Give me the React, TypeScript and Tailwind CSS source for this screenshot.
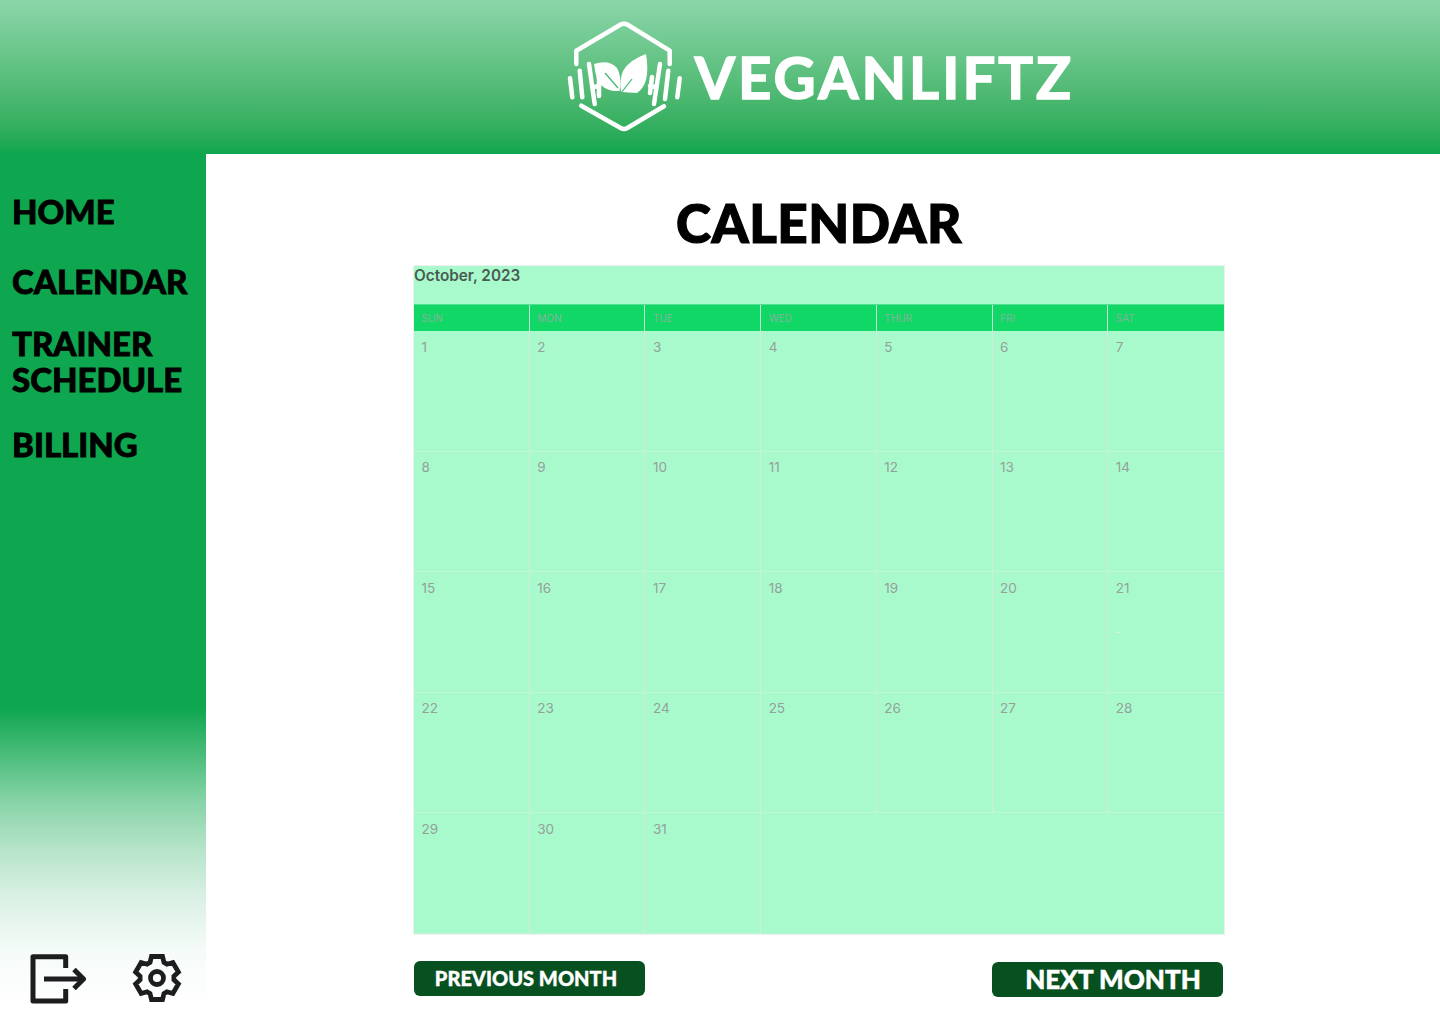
const DAYS = ["SUN", "MON", "TUE", "WED", "THUR", "FRI", "SAT"];
const DATES = Array.from({ length: 31 }, (_, i) => i + 1);
const NAV = ["HOME", "CALENDAR", "TRAINER SCHEDULE", "BILLING"];

const display = "font-['Lato','Liberation_Sans',sans-serif]";

function Logo() {
  return (
    <svg width="116" height="112" viewBox="0 0 116 112" fill="none" className="shrink-0">
      <g stroke="#fff" strokeWidth="4.500" strokeLinecap="round" strokeLinejoin="round">
        <path d="M9.300 43 V29.700 L53.700 3.500 Q57 1.800 60.300 3.500 L102.700 29.700 V43" />
        <path d="M14.300 84.700 L53.700 107 Q57 108.800 60.300 107 L97 85.300" />
        <path d="M3 57.300 L5.300 76.300" />
        <path d="M12.700 49.700 L15.300 76.300" />
        <path d="M22 43 L27.700 83" />
        <path d="M32 56 V75" />
        <path d="M27 66 L32 65" />
        <path d="M112.700 57.300 L110.300 76.300" />
        <path d="M101.300 49.700 L98 78" />
        <path d="M93 43 L87 83" />
        <path d="M85 56 L83 72" />
        <path d="M88 66 L83 65" />
      </g>
      <path d="M27 43 Q42 38 50 47 Q55 55 52.500 70 Q36 71 30 58 Q28 51 27 43 Z" fill="#fff" />
      <path d="M38 52 L51 67" stroke="#3fb573" strokeWidth="1.200" />
      <path d="M79 33 Q62 39 56 50 Q52 60 54 71 L70 72 Q84 63 79 33 Z" fill="#fff" />
      <path d="M54 72 L65 58" stroke="#3fb573" strokeWidth="1.200" />
    </svg>
  );
}

function LogoutIcon() {
  return (
    <svg width="56" height="50" viewBox="0 0 56 50" fill="none" stroke="#1d1d1f" strokeWidth="5">
      <path d="M35.700 14 V2.700 H3 V47 H35.700 V35" strokeLinejoin="round" />
      <path d="M14 25 H52" />
      <path d="M44 15.500 L53.500 25 L44 34.500" />
    </svg>
  );
}

// six square teeth round a ring
const GEAR_POINTS = [0, 1, 2, 3, 4, 5]
  .flatMap((n) => {
    const a = (n * Math.PI) / 3;
    const pt = (x: number, y: number) =>
      `${(25 + x * Math.cos(a) - y * Math.sin(a)).toFixed(2)},${(24 + x * Math.sin(a) + y * Math.cos(a)).toFixed(2)}`;
    return [pt(-7, -15.500), pt(-5.500, -21.500), pt(5.500, -21.500), pt(7, -15.500)];
  })
  .join(" ");

function GearIcon() {
  return (
    <svg width="50" height="50" viewBox="0 0 50 50" fill="none" stroke="#1d1d1f" strokeWidth="4.800">
      <polygon points={GEAR_POINTS} strokeLinejoin="miter" />
      <circle cx="25" cy="24" r="6.500" />
    </svg>
  );
}

function DayCell({ date }: { date: number }) {
  return (
    <div className="h-[120.500px] border-r border-b border-r-[#d3eadc] border-b-[#c2f5d8] px-[7.500px] pt-[6.500px] text-[13.500px] leading-[18px] text-[#94a09b] nth-[7n]:border-r-0">
      {date}
      {date === 21 && <div className="mt-[30px] text-[11px] leading-[10px] text-[#dff2e8]">-</div>}
    </div>
  );
}

export default function App() {
  return (
    <div className="flex min-h-[1024px] flex-col bg-white font-['Inter',sans-serif]">
      <header className="flex h-[154px] items-center justify-center gap-[12px] bg-gradient-to-b from-[#8bd6a9] to-[#0aa64e] pl-[201px]">
        <Logo />
        <span className={`${display} text-[58px] leading-none font-bold tracking-[3px] text-white [-webkit-text-stroke:1.500px_white]`}>VEGANLIFTZ</span>
      </header>

      <div className="flex flex-1">
        <aside className="flex h-[870px] w-[206px] shrink-0 flex-col justify-between bg-[linear-gradient(to_bottom,#0ea64f_0%,#0ea64f_63.700%,#86d3a6_74.300%,#b7e4ca_80%,#dbf1e5_85.700%,#f5fbf8_91.500%,#ffffff_97.800%)] pl-[12px]">
          <nav className={`${display} flex flex-col pt-[39px] text-[33px] leading-[36px] font-black text-black [-webkit-text-stroke:0.8px_black]`}>
            {NAV.map((item, i) => (
              <a key={item} className={i === 0 ? "" : i === 1 ? "mt-[34px]" : i === 2 ? "mt-[26px] w-[180px]" : "mt-[29px]"}>
                {item}
              </a>
            ))}
          </nav>
          <div className="mb-[20px] flex items-center gap-[46px] pl-[18px]">
            <LogoutIcon />
            <GearIcon />
          </div>
        </aside>

        <main className="flex flex-1 justify-center pr-[8px]">
          <div className="w-[810px]">
            <h1 className={`${display} mt-[42px] text-center text-[53px] leading-[54px] font-black tracking-[0.5px] text-black [-webkit-text-stroke:1.200px_black]`}>CALENDAR</h1>
            <section className="mt-[16px] bg-[#a8facc] shadow-[0_0_0_1px_#efefef]">
              <div className="h-[38px] pt-[1px] text-[15.300px] leading-[18px] font-semibold text-[#4a5a52]">October, 2023</div>
              <div className="grid grid-cols-7 border-t border-[#52df90] bg-[#10d766]">
                {DAYS.map((day) => (
                  <div key={day} className="h-[26px] border-r border-[#c4efd5] pl-[7.500px] text-[10px] leading-[27px] text-[#84b49a] last:border-r-0">
                    {day}
                  </div>
                ))}
              </div>
              <div className="grid grid-cols-7">
                {DATES.map((date) => (
                  <DayCell key={date} date={date} />
                ))}
              </div>
            </section>
            <div className={`${display} mt-[27px] flex items-start justify-between font-black text-white`}>
              <button className="h-[35px] w-[231px] rounded-[6px] bg-[#07501f] pr-[7px] text-[20px] [-webkit-text-stroke:0.4px_white]">PREVIOUS MONTH</button>
              <button className="mt-[1px] mr-[1px] h-[35px] w-[231px] rounded-[6px] bg-[#07501f] pl-[11px] text-[26px] leading-[35px] [-webkit-text-stroke:0.5px_white]">NEXT MONTH</button>
            </div>
          </div>
        </main>
      </div>
    </div>
  );
}
